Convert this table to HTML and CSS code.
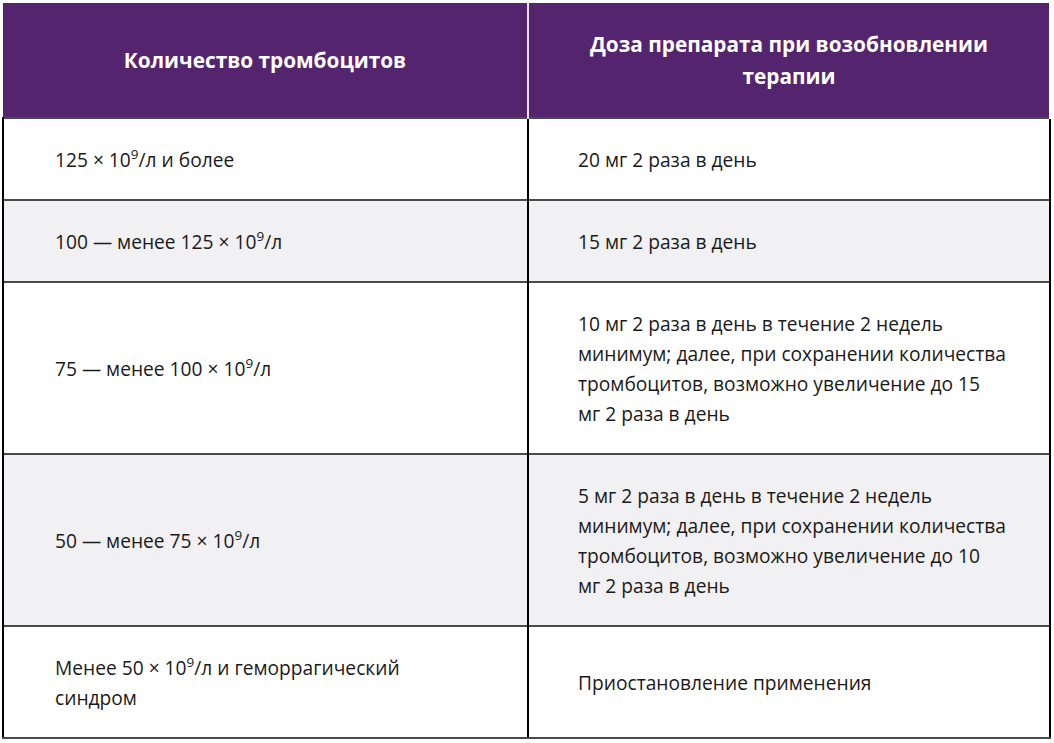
FILE: index.html
```html
<!DOCTYPE html>
<html lang="ru">
<head>
<meta charset="utf-8">
<title>Таблица</title>
<link rel="stylesheet" href="styles.css">
</head>
<body>
<table class="dose-table">
  <thead>
    <tr>
      <th class="col-left">Количество тромбоцитов</th>
      <th class="col-right">Доза препарата при возобновлении терапии</th>
    </tr>
  </thead>
  <tbody>
    <tr>
      <td>125 × 10<sup>9</sup>/л и более</td>
      <td>20 мг 2 раза в день</td>
    </tr>
    <tr class="alt">
      <td>100 — менее 125 × 10<sup>9</sup>/л</td>
      <td>15 мг 2 раза в день</td>
    </tr>
    <tr>
      <td>75 — менее 100 × 10<sup>9</sup>/л</td>
      <td class="long">10 мг 2 раза в день в течение 2 недель<br>минимум; далее, при сохранении количества<br>тромбоцитов, возможно увеличение до 15<br>мг 2 раза в день</td>
    </tr>
    <tr class="alt">
      <td>50 — менее 75 × 10<sup>9</sup>/л</td>
      <td class="long">5 мг 2 раза в день в течение 2 недель<br>минимум; далее, при сохранении количества<br>тромбоцитов, возможно увеличение до 10<br>мг 2 раза в день</td>
    </tr>
    <tr>
      <td>Менее 50 × 10<sup>9</sup>/л и геморрагический<br>синдром</td>
      <td>Приостановление применения</td>
    </tr>
  </tbody>
</table>
</body>
</html>
```

FILE: styles.css
```css
html, body {
  margin: 0;
  padding: 0;
  background: #ffffff;
}

body {
  padding: 3px 3px 0 2px;
  font-family: "Open Sans", "Noto Sans", sans-serif;
  color: #1a1a1a;
}

.dose-table {
  width: 1049px;
  border-collapse: collapse;
  table-layout: fixed;
}

.dose-table th {
  background: #55246f;
  color: #ffffff;
  font-weight: 700;
  font-size: 20.8px;
  line-height: 32px;
  height: 115px;
  padding: 0 36px;
  text-align: center;
  vertical-align: middle;
  box-sizing: border-box;
}

.dose-table th.col-left {
  width: 525px;
  border-right: 2px solid #e8e2ee;
}

.dose-table th.col-right {
  border-right: 2px solid #ffffff;
}

.dose-table thead tr {
  border-bottom: 1px solid #d9cfe2;
}

.dose-table td {
  font-size: 19.2px;
  line-height: 30px;
  padding: 26px 24px 24px 51px;
  vertical-align: middle;
  border-top: 2px solid #4a4a4a;
  border-left: 2px solid #000000;
  border-right: 2px solid #000000;
}

.dose-table td + td {
  padding-left: 49px;
}

.dose-table td.long {
  white-space: nowrap;
}

.dose-table tbody tr:last-child td {
  border-bottom: 2px solid #4a4a4a;
}

.dose-table tr.alt td {
  background: #f1f0f2;
}

.dose-table sup {
  font-size: 13.5px;
  line-height: 0;
  vertical-align: 8px;
}
```
